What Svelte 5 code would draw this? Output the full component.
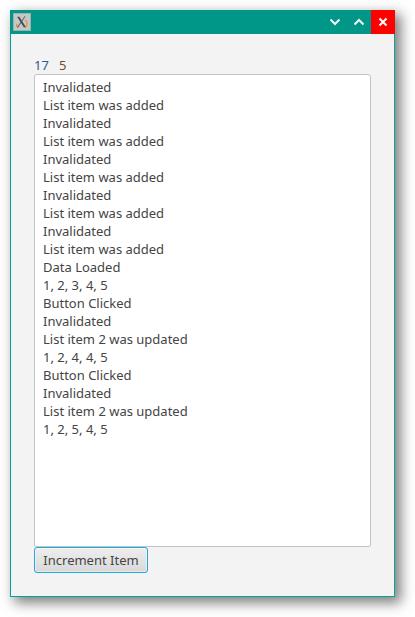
<script>
  const rows = ["Invalidated","List item was added","Invalidated","List item was added","Invalidated","List item was added","Invalidated","List item was added","Invalidated","List item was added","Data Loaded","1, 2, 3, 4, 5","Button Clicked","Invalidated","List item 2 was updated","1, 2, 4, 4, 5","Button Clicked","Invalidated","List item 2 was updated","1, 2, 5, 4, 5"];
</script>

<div class="page">
  <div class="window">
    <header class="titlebar">
      <div class="appicon">
        <svg width="18" height="18" viewBox="0 0 18 18">
          <path d="M3 11C2.500 13.500 3.500 15 5.500 15" fill="none" stroke="#d98a45" stroke-width="1.200"/>
          <path d="M12.500 6.500C15.500 8.500 15.500 12.500 12.500 15" fill="none" stroke="#e09040" stroke-width="1.300"/>
          <path d="M3.500 3H6L13.500 15H11Z" fill="#4a4a4a"/>
          <path d="M12 2.500L3.500 15H4.600L13 2.500Z" fill="#4a4a4a"/>
        </svg>
      </div>
      <div class="spacer"></div>
      <button class="winbtn" aria-label="Minimize">
        <svg width="12" height="12" viewBox="0 0 12 12"><path d="M1.500 3.500L6 8L10.500 3.500" fill="none" stroke="#eef8f6" stroke-width="2"/></svg>
      </button>
      <button class="winbtn" aria-label="Maximize">
        <svg width="12" height="12" viewBox="0 0 12 12"><path d="M1.500 8.500L6 4L10.500 8.500" fill="none" stroke="#eef8f6" stroke-width="2"/></svg>
      </button>
      <button class="winbtn close" aria-label="Close">
        <svg width="10" height="10" viewBox="0 0 10 10"><path d="M1.500 1.500L8.500 8.500M8.500 1.500L1.500 8.500" fill="none" stroke="#fff" stroke-width="2"/></svg>
      </button>
    </header>
    <main class="content">
      <div class="counts"><span class="blue">17</span><span class="brown">5</span></div>
      <div class="list">
        {#each rows as r}
          <div class="row">{r}</div>
        {/each}
      </div>
      <button class="action">Increment Item</button>
    </main>
  </div>
</div>

<style>
  :global(body) {
    margin: 0;
    background: #fff;
  }
  .page {
    box-sizing: border-box;
    width: 415px;
    height: 617px;
    padding: 10px 0 0 10px;
    overflow: hidden;
  }
  .window {
    box-sizing: border-box;
    width: 385px;
    height: 587px;
    background: #f3f3f3;
    border: 1px solid #00a594;
    border-top: none;
    box-shadow: 5px 5px 12px 1px rgba(0, 0, 0, 0.5);
    display: flex;
    flex-direction: column;
    font-family: "Noto Sans", sans-serif;
    font-size: 13px;
    color: #444;
  }
  .titlebar {
    height: 24px;
    margin: 0 -1px;
    background: #009688;
    display: flex;
    align-items: center;
    flex: none;
  }
  .appicon {
    width: 18px;
    height: 18px;
    margin-left: 3px;
    background: #c4c8c6;
    border: 1px solid #9fb0ac;
    box-sizing: border-box;
    display: flex;
    align-items: center;
    justify-content: center;
    overflow: hidden;
  }
  .spacer {
    flex: 1;
  }
  .winbtn {
    width: 24px;
    height: 24px;
    padding: 0;
    border: none;
    background: transparent;
    display: flex;
    align-items: center;
    justify-content: center;
  }
  .close {
    background: #f00;
  }
  .content {
    flex: 1;
    display: flex;
    flex-direction: column;
    align-items: flex-start;
    padding: 22px 23px 0;
  }
  .counts {
    display: flex;
    gap: 10px;
    height: 18px;
    line-height: 18px;
    white-space: pre;
  }
  .blue {
    color: #2a5a94;
  }
  .brown {
    color: #7a4a2a;
  }
  .list {
    box-sizing: border-box;
    width: 337px;
    height: 473px;
    background: #fff;
    border: 1px solid #c4c4c4;
    border-radius: 3px 3px 2px 2px;
    padding: 3px 8px;
    flex: none;
  }
  .row {
    height: 18px;
    line-height: 18px;
    white-space: nowrap;
  }
  .action {
    box-sizing: border-box;
    width: 114px;
    height: 26px;
    padding: 0;
    font: inherit;
    color: #444;
    border: 1.500px solid #1fa9dd;
    border-radius: 3px;
    background: linear-gradient(#eeeeee, #d9d9d9);
    box-shadow: inset 0 0 0 1px #fff6;
  }
</style>
